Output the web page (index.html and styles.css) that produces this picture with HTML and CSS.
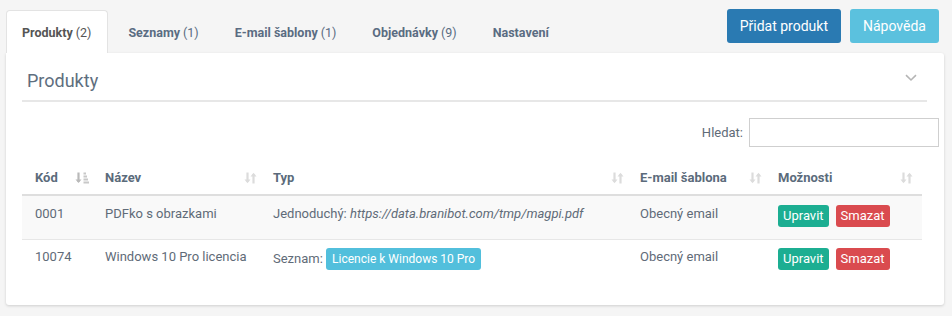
FILE: index.html
```html
<!DOCTYPE html>
<html lang="cs">
<head>
<meta charset="utf-8">
<title>Produkty</title>
<link rel="stylesheet" href="styles.css">
</head>
<body>
<div class="topbar">
  <ul class="tabs">
    <li class="tab active"><b>Produkty</b> (2)</li>
    <li class="tab"><b>Seznamy</b> (1)</li>
    <li class="tab"><b>E-mail šablony</b> (1)</li>
    <li class="tab"><b>Objednávky</b> (9)</li>
    <li class="tab"><b>Nastavení</b></li>
  </ul>
  <div class="actions">
    <button class="btn btn-primary">Přidat produkt</button>
    <button class="btn btn-info">Nápověda</button>
  </div>
</div>
<div class="panel">
  <div class="panel-head">
    <h2 class="panel-title">Produkty</h2>
    <svg class="chevron" width="12" height="8" viewBox="0 0 12 8"><path d="M1 1.2 L6 6 L11 1.2" fill="none" stroke="#b5b5b5" stroke-width="1.6"/></svg>
  </div>
  <div class="search">
    <label class="search-label">Hledat:</label>
    <input class="search-input" type="text">
  </div>
  <table class="grid">
    <colgroup>
      <col class="c1"><col class="c2"><col class="c3"><col class="c4"><col class="c5">
    </colgroup>
    <thead>
      <tr>
        <th><span class="th"><span>Kód</span>
          <svg width="14" height="12" viewBox="0 0 14 12"><path d="M3.5 0.5 V10" stroke="#b9b9b9" stroke-width="2.2"/><path d="M0.5 7.5 L3.5 11 L6.5 7.5 Z" fill="#b9b9b9"/><rect x="8.5" y="0.5" width="2.5" height="2" fill="#c8c8c8"/><rect x="8.5" y="3.5" width="3.5" height="2" fill="#c8c8c8"/><rect x="8.5" y="6.5" width="4.5" height="2" fill="#c8c8c8"/><rect x="8.5" y="9.5" width="5.5" height="2" fill="#c8c8c8"/></svg></span></th>
        <th><span class="th"><span>Název</span><svg class="sort" width="13" height="12" viewBox="0 0 13 12"><path d="M3.5 0.5 V10" stroke="#dcdcdc" stroke-width="2.2"/><path d="M0.5 7.5 L3.5 11.3 L6.5 7.5 Z" fill="#dcdcdc"/><path d="M9.5 11.5 V2" stroke="#dcdcdc" stroke-width="2.2"/><path d="M6.5 4.5 L9.5 0.7 L12.5 4.5 Z" fill="#dcdcdc"/></svg></span></th>
        <th><span class="th"><span>Typ</span><svg class="sort" width="13" height="12" viewBox="0 0 13 12"><path d="M3.5 0.5 V10" stroke="#dcdcdc" stroke-width="2.2"/><path d="M0.5 7.5 L3.5 11.3 L6.5 7.5 Z" fill="#dcdcdc"/><path d="M9.5 11.5 V2" stroke="#dcdcdc" stroke-width="2.2"/><path d="M6.5 4.5 L9.5 0.7 L12.5 4.5 Z" fill="#dcdcdc"/></svg></span></th>
        <th><span class="th"><span>E-mail šablona</span><svg class="sort" width="13" height="12" viewBox="0 0 13 12"><path d="M3.5 0.5 V10" stroke="#dcdcdc" stroke-width="2.2"/><path d="M0.5 7.5 L3.5 11.3 L6.5 7.5 Z" fill="#dcdcdc"/><path d="M9.5 11.5 V2" stroke="#dcdcdc" stroke-width="2.2"/><path d="M6.5 4.5 L9.5 0.7 L12.5 4.5 Z" fill="#dcdcdc"/></svg></span></th>
        <th class="last"><span class="th"><span>Možnosti</span><svg class="sort" width="13" height="12" viewBox="0 0 13 12"><path d="M3.5 0.5 V10" stroke="#dcdcdc" stroke-width="2.2"/><path d="M0.5 7.5 L3.5 11.3 L6.5 7.5 Z" fill="#dcdcdc"/><path d="M9.5 11.5 V2" stroke="#dcdcdc" stroke-width="2.2"/><path d="M6.5 4.5 L9.5 0.7 L12.5 4.5 Z" fill="#dcdcdc"/></svg></span></th>
      </tr>
    </thead>
    <tbody>
      <tr class="odd">
        <td>0001</td>
        <td>PDFko s obrazkami</td>
        <td>Jednoduchý: <i>https://data.branibot.com/tmp/magpi.pdf</i></td>
        <td>Obecný email</td>
        <td><span class="sbtn green">Upravit</span><span class="sbtn red">Smazat</span></td>
      </tr>
      <tr>
        <td>10074</td>
        <td>Windows 10 Pro licencia</td>
        <td class="typ">Seznam: <span class="tag">Licencie k Windows 10 Pro</span></td>
        <td>Obecný email</td>
        <td><span class="sbtn green">Upravit</span><span class="sbtn red">Smazat</span></td>
      </tr>
    </tbody>
  </table>
</div>
</body>
</html>
```

FILE: styles.css
```css
html, body {
  margin: 0;
  padding: 0;
}
body {
  background: #f5f5f5;
  font-family: Roboto, "Liberation Sans", Arial, sans-serif;
  font-size: 13px;
  color: #5f6b78;
  width: 952px;
  height: 316px;
  overflow: hidden;
}
.topbar {
  display: flex;
  justify-content: space-between;
  align-items: flex-start;
  height: 53px;
  padding: 0 13px 0 6px;
}
.tabs {
  list-style: none;
  margin: 10px 0 0 0;
  padding: 0;
  display: flex;
}
.tab {
  height: 43px;
  box-sizing: border-box;
  padding: 0 15px;
  margin-right: 4px;
  display: flex;
  align-items: center;
  font-size: 12.5px;
  color: #5a6c82;
  border: 1px solid transparent;
  border-bottom: none;
  border-radius: 4px 4px 0 0;
}
.tab b {
  font-weight: 700;
  margin-right: 3px;
}
.tab:last-child b { margin-right: 0; }
.tab.active {
  background: #fff;
  border-color: #e3e3e3;
  color: #555;
  padding-right: 16px;
}
.actions {
  display: flex;
  gap: 9px;
  margin-top: 9px;
}
.btn {
  height: 34px;
  border: none;
  border-radius: 3px;
  padding: 0 13px;
  font-family: Roboto, "Liberation Sans", Arial, sans-serif;
  font-size: 14px;
  color: #fff;
}
.btn-primary { background: #2a7ab2; }
.btn-info { background: #5bc1de; }
.panel {
  margin: 0 8px 0 6px;
  background: #fff;
  border-radius: 0 3px 3px 3px;
  box-shadow: 0 1px 3px rgba(0,0,0,0.16);
  padding: 0 22px 20px 16px;
  height: 252px;
  box-sizing: border-box;
}
.panel-head {
  display: flex;
  justify-content: space-between;
  align-items: center;
  height: 47px;
  border-bottom: 2px solid #e7e7e7;
  margin-right: -5px;
  padding: 0 10px 0 5px;
}
.panel-title {
  margin: 7px 0 0 0;
  font-size: 18px;
  font-weight: 400;
  color: #5e6e7e;
}
.chevron { margin-top: 3px; }
.search {
  display: flex;
  justify-content: flex-end;
  align-items: center;
  gap: 6px;
  margin: 16px -17px 0 0;
}
.search-label {
  color: #5f6b78;
  font-size: 13px;
}
.search-input {
  width: 190px;
  height: 29px;
  box-sizing: border-box;
  border: 1px solid #cfcfcf;
  margin: 0;
}
.grid {
  margin-top: 17px;
  width: 900px;
  border-collapse: collapse;
  table-layout: fixed;
}
.c1 { width: 70px; }
.c2 { width: 168px; }
.c3 { width: 367px; }
.c4 { width: 138px; }
.c5 { width: 157px; }
.grid th {
  text-align: left;
  font-weight: 700;
  color: #5b6b7b;
  padding: 5px 3px 7px 13px;
  line-height: 18px;
  border-bottom: 2px solid #dedede;
}
.grid th.last { padding-right: 9px; }
.th {
  display: flex;
  justify-content: space-between;
  align-items: center;
}
.grid td {
  vertical-align: top;
  padding: 9px 13px 12px;
  line-height: 18px;
  border-bottom: 1px solid #e7e7e7;
}
.grid tbody tr:last-child td { border-bottom: none; padding-top: 8px; }
.grid tr.odd td { background: #f9f9f9; }
.grid i { font-style: italic; }
.sbtn {
  display: inline-block;
  height: 22px;
  line-height: 22px;
  box-sizing: border-box;
  padding: 0 5px;
  border-radius: 3px;
  color: #fff;
  font-size: 13px;
  vertical-align: top;
  margin-right: 7px;
}
.green { background: #1cae92; }
.red { background: #da4b4f; }
.tag {
  display: inline-block;
  padding: 3px 6px;
  line-height: 16px;
  border-radius: 3px;
  background: #52bfdc;
  color: #fff;
  font-size: 12px;
}
```
